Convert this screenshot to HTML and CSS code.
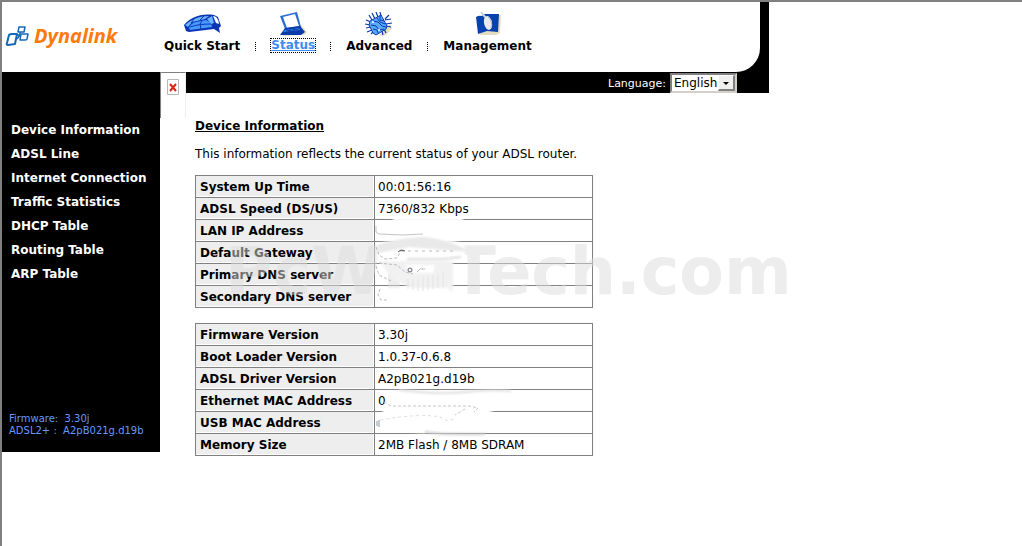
FILE: index.html
```html
<!DOCTYPE html>
<html lang="en">
<head>
  <meta charset="UTF-8">
  <meta name="viewport" content="width=device-width, initial-scale=1.0">
  <title>Dynalink ADSL Router</title>
  <link rel="stylesheet" href="styles.css">
</head>
<body>

  <header class="top">
    <div class="top-inner">
      <div class="logo">
        <svg class="logo-mark" width="25" height="22" viewBox="0 0 25 22" fill="none" stroke="#1468b8" stroke-width="2" stroke-linejoin="round">
          <path d="M4 10q1-1 3-1h5l-2 10-7 1q-2 0-1-2z"/>
          <path d="M14 2h6l-1 5h-6z" stroke-width="1.5"/>
          <path d="M16 9h7l-1 5q0 1-2 1h-5z" stroke-width="1.5"/>
          <path d="M15 7v3h-4M15 10l-3 4" stroke-width="1.5"/>
        </svg>
        <span class="logo-text">Dynalink</span>
      </div>

      <nav class="menu">
        <a href="#">
          <svg width="40" height="24" viewBox="0 0 40 24">
            <path d="M2 13C8 6 18 1 32 3l4 2 3 9-2 2 1 5-6-4-8 1-17 2-3-1z" fill="#0b35b5"/>
            <path d="M3 13C9 8 16 4 27 4l-4 3-13 3-4 5z" fill="#69b5ff"/>
            <path d="M7 16q2-5 7-6l10-2 5 3 1 4-22 3z" fill="#479bff"/>
            <path d="M25 7l5-3 2 7-3 1z" fill="#69b5ff"/>
            <path d="M31 4q5 0 6 8l-3-1z" fill="#fff"/>
            <path d="M20 9l-2 3 1 5M8 15q8-3 21-3M22 4l-4 4M12 7l-3 4" stroke="#0b35b5" fill="none"/>
          </svg>
          Quick Start
        </a>
        <span class="sep"></span>
        <a href="#" class="active">
          <svg width="30" height="24" viewBox="0 0 30 24">
            <path d="M23 13l6 7-3 3-22 1z" fill="#e2dcc0"/>
            <path d="M2 4l17-4 4 15-16 2z" fill="#2a6fd0"/>
            <path d="M5 5l12-3 4 12-12 2z" fill="#fff"/>
            <path d="M7 16l15-2 5 6-4 3H2z" fill="#093aa8"/>
            <path d="M7 18l14-2 1 2-17 2z" fill="#3f8ff5"/>
            <path d="M8 19l13-2M12 17l-1 3M16 16v4" stroke="#093aa8"/>
          </svg>
          <span class="label">Status</span>
        </a>
        <span class="sep"></span>
        <a href="#">
          <svg width="28" height="24" viewBox="0 0 28 24">
            <path d="M25 12l2 4-6 7-7 1z" fill="#e2dcc0"/>
            <path d="M4 3l3 5M7 1l3 6M11 0l2 5M15 0l1 4M1 8l5 2M0 12l5 1M1 16l5-1M2 20l5-2M6 22l3-3M18 23l-1-4M21 21l-2-4M26 15l-5-1M27 11l-6 1M26 7l-6 1M24 3l-4 4" stroke="#0a39aa" stroke-width="1.2"/>
            <path d="M5 9l11-6 6 11-1 3-10 6-3-2-4-8z" fill="#58aaff" stroke="#0a39aa"/>
            <path d="M8 9l5 1 4 4 4 1M12 6l3 4 5 2M15 4v4l4 1M6 13l5 1 3 4 5-1M8 17l4 1 1 3" stroke="#0a39aa" fill="none"/>
            <circle cx="8" cy="10" r="1" fill="#fff"/>
            <circle cx="14" cy="18" r="1" fill="#fff"/>
          </svg>
          Advanced
        </a>
        <span class="sep"></span>
        <a href="#">
          <svg width="26" height="24" viewBox="0 0 26 24">
            <path d="M8 3h18l-1 18-4 2H5z" fill="#e2dcc0"/>
            <path d="M1 5q3-2 6-1l2-2h15l-1 18-11-1-9 3z" fill="#0741af"/>
            <path d="M6 0l5 6" stroke="#cbd5df" stroke-width="2"/>
            <ellipse cx="13" cy="11" rx="4" ry="7" transform="rotate(-12 13 11)" fill="#e9e9ee"/>
            <path d="M13 5q5 4 3 11" stroke="#b4bac8" fill="none"/>
          </svg>
          Management
        </a>
      </nav>
    </div>
  </header>

  <div class="langbar">
    <label for="language">Language:</label>
    <span class="select-box">
      <select id="language">
        <option>English</option>
      </select>
      <span class="arrow"></span>
    </span>
  </div>

  <div class="main">
    <aside class="sidebar">
      <ul>
        <li><a href="#">Device Information</a></li>
        <li><a href="#">ADSL Line</a></li>
        <li><a href="#">Internet Connection</a></li>
        <li><a href="#">Traffic Statistics</a></li>
        <li><a href="#">DHCP Table</a></li>
        <li><a href="#">Routing Table</a></li>
        <li><a href="#">ARP Table</a></li>
      </ul>
      <div class="version">
        <div>Firmware: &nbsp;3.30j</div>
        <div>ADSL2+ : &nbsp;A2pB021g.d19b</div>
      </div>
    </aside>

    <div class="corner">
      <svg width="12" height="16" viewBox="0 0 12 16">
        <path d="M.5.5h11v15H.5z" fill="#fff" stroke="#b8b8b8"/>
        <path d="M3 5l6 7M9 5l-6 7" stroke="#e02010" stroke-width="2"/>
      </svg>
    </div>

    <main class="content">
      <h1>Device Information</h1>
      <p>This information reflects the current status of your ADSL router.</p>

      <div class="block">
        <table>
          <tr><th scope="row">System Up Time</th><td>00:01:56:16</td></tr>
          <tr><th scope="row">ADSL Speed (DS/US)</th><td>7360/832 Kbps</td></tr>
          <tr><th scope="row">LAN IP Address</th><td></td></tr>
          <tr><th scope="row">Default Gateway</th><td></td></tr>
          <tr><th scope="row">Primary DNS server</th><td></td></tr>
          <tr><th scope="row">Secondary DNS server</th><td></td></tr>
        </table>
        <div class="watermark">PcWinTech.com</div>
        <!-- erased addresses -->
        <svg class="smudge" width="120" height="94" viewBox="0 0 120 94" fill="none">
          <g class="soft">
            <path d="M20 -1h70v4H20z" fill="#fff"/>
            <path d="M4 25q30-9 50-7 30 3 38 8v16H4z" fill="#fff"/>
            <path d="M4 26q30-9 48-8 30 4 44 15l-60-5-31 6z" fill="#e9e9e9"/>
            <path d="M6 42h74v30H45L20 60z" fill="#f1f1f1"/>
            <path d="M32 46h30l-2 8H40z" fill="#fff"/>
            <path d="M12 69h64v14H12z" fill="#fff"/>
            <path d="M34 40h36l18-2" stroke="#bbb"/>
          </g>
          <path d="M3 7v6l3 2 24 1 20-1" stroke="#c4c4c4"/>
          <path d="M3 28l3 8 6 4 12-1 4-7M6 44l18 2 8 7 8 2M3 47l3 9 12 6M7 70l-2 6 3 5h6" stroke="#bbb" stroke-dasharray="3 2"/>
          <path d="M28 32h52" stroke="#b4bcc4" stroke-dasharray="3 4"/>
          <path d="M25 33l3-2 4 1" stroke="#555"/>
          <circle cx="37" cy="51" r="2" stroke="#667"/>
          <path d="M44 53l3-3h5" stroke="#bbb"/>
          <path d="M35 60v10M40 60v11M45 60v12M50 58v14M55 57v14M60 56v14M65 55v14M70 54v14" stroke="#e4e4e4"/>
        </svg>
      </div>

      <div class="block">
        <table>
          <tr><th scope="row">Firmware Version</th><td>3.30j</td></tr>
          <tr><th scope="row">Boot Loader Version</th><td>1.0.37-0.6.8</td></tr>
          <tr><th scope="row">ADSL Driver Version</th><td>A2pB021g.d19b</td></tr>
          <tr><th scope="row">Ethernet MAC Address</th><td>0</td></tr>
          <tr><th scope="row">USB MAC Address</th><td></td></tr>
          <tr><th scope="row">Memory Size</th><td>2MB Flash / 8MB SDRAM</td></tr>
        </table>
        <svg class="smudge mac" width="150" height="50" viewBox="0 0 150 50" fill="none">
          <g class="soft">
            <path d="M12 2q60 0 124 2l-18 12-10 8H12z" fill="#fff"/>
            <path d="M8 20h112l-8 6-6 14-60 4-40-5z" fill="#fff"/>
            <path d="M24 1q40 5 66 2t46-1" stroke="#ddd" stroke-width="2"/>
            <path d="M50 43q20 3 60 2" stroke="#ccc" stroke-width="2"/>
          </g>
          <path d="M9 13l7 4h50l28 0 9 2-4 4M90 20l-10 6" stroke="#c4c4c4" stroke-dasharray="3 2"/>
          <path d="M5 31q40-7 60-3l8 4 8-3" stroke="#ddd" stroke-dasharray="3 3"/>
          <path d="M4 31v7M2 32v5" stroke="#8a9aa8"/>
        </svg>
      </div>
    </main>
  </div>

</body>
</html>
```
FILE: styles.css
```css
* {
  box-sizing: border-box;
}

html {
  min-height: 100%;
  border-top: 2px solid #808080;
  border-left: 2px solid #808080;
}

body {
  margin: 0;
  background-color: #fff;
  color: #000;
  font-family: Verdana, "DejaVu Sans", sans-serif;
  font-size: 12px;
  line-height: 16px;
}

a {
  color: inherit;
  text-decoration: none;
}

.top,
.langbar {
  max-width: 767px;
  background-color: #000;
}

.top {
  padding-right: 9px;
}

.top-inner {
  display: flex;
  align-items: flex-start;
  height: 70px;
  background-color: #fff;
  border-bottom-right-radius: 24px;
}

.logo {
  display: flex;
  align-items: center;
  gap: 4px;
  width: 162px;
  padding: 22px 0 0 3px;
}

.logo-text {
  color: #ff7a0a;
  font-family: "Open Sans", sans-serif;
  font-size: 20px;
  font-style: italic;
  font-weight: bold;
  line-height: 24px;
}

.menu {
  display: flex;
  align-items: flex-end;
  gap: 15px;
  padding-top: 10px;
  font-weight: bold;
}

.menu a {
  display: flex;
  flex-direction: column;
  align-items: center;
  gap: 2px;
}

.menu .label {
  line-height: 13px;
  margin: 1px 0 2px;
  outline: 1px dotted #000;
}

.menu .active {
  color: #3b8cf0;
  text-decoration: underline;
}

.sep {
  height: 9px;
  margin-bottom: 3px;
  border-left: 1px dotted #000;
}

.langbar {
  display: flex;
  justify-content: flex-end;
  align-items: center;
  gap: 4px;
  height: 21px;
  padding-right: 32px;
  color: #fff;
  font-size: 11px;
}

.langbar label {
  padding-top: 3px;
}

.select-box {
  position: relative;
}

select {
  display: block;
  appearance: none;
  width: 67px;
  height: 20px;
  padding: 0 15px 0 2px;
  border: 2px solid #d4d0c8;
  border-top-color: #808080;
  border-left-color: #808080;
  border-radius: 0;
  background-color: #fff;
  color: #000;
  font-family: inherit;
  font-size: 12px;
}

.arrow {
  position: absolute;
  top: 2px;
  right: 2px;
  width: 17px;
  height: 16px;
  background-color: #f0f0f0;
  border: 1px solid #fff;
  border-right: 2px solid #808080;
  border-bottom: 2px solid #808080;
  pointer-events: none;
}

.arrow::after {
  content: "";
  position: absolute;
  top: 6px;
  left: 4px;
  border: 3px solid transparent;
  border-top-color: #000;
  border-bottom: 0;
}

.main {
  display: flex;
  align-items: flex-start;
  margin-top: -21px;
}

.sidebar {
  width: 158px;
  padding: 46px 0 15px 9px;
  background-color: #000;
  color: #fff;
}

.sidebar ul {
  list-style-type: none;
  margin: 0;
  padding: 0;
  font-weight: bold;
}

.sidebar li {
  line-height: 24px;
}

.version {
  margin-top: 127px;
  margin-left: -2px;
  color: #6699ff;
  font-size: 10px;
  line-height: 12px;
}

.corner {
  width: 26px;
  height: 46px;
  padding: 6px;
  background-color: #fff;
  border-top: 1px solid #808080;
  border-left: 1px solid #808080;
  border-right: 1px solid #eee;
}

.content {
  flex: 1;
  padding: 46px 9px 0;
}

h1 {
  margin: 0 0 12px;
  font-size: 12px;
  line-height: 16px;
  text-decoration: underline;
}

p {
  margin: 0 0 13px;
}

.block {
  position: relative;
  margin-bottom: 15px;
}

table {
  width: 398px;
  border-collapse: collapse;
  border: 1px solid #808080;
}

th,
td {
  height: 22px;
  padding: 0 4px;
  border: 1px solid #808080;
  box-shadow: inset -1px -1px #fff;
  text-align: left;
}

th {
  width: 179px;
  background-color: #eee;
}

td {
  padding: 0 3px;
}

.watermark {
  position: absolute;
  top: 60px;
  left: 30px;
  color: rgba(220, 220, 220, 0.5);
  font-size: 65px;
  font-weight: bold;
  line-height: 74px;
  pointer-events: none;
}

.smudge {
  position: absolute;
  top: 44px;
  left: 178px;
}

.mac {
  top: 66px;
  left: 180px;
}

.soft {
  filter: blur(1px);
}
```
